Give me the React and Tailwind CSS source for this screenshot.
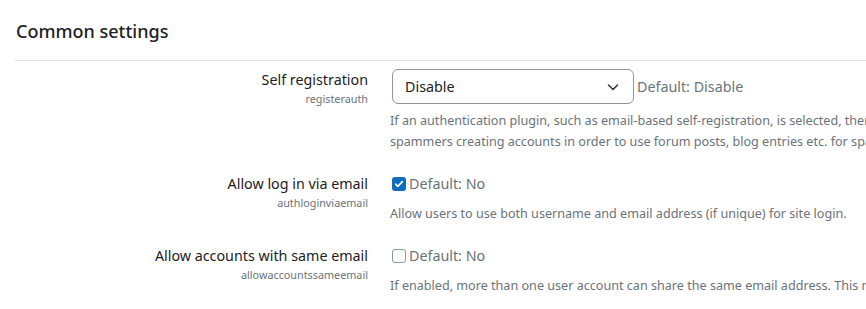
const SETTINGS = [
  {
    label: 'Self registration',
    name: 'registerauth',
    kind: 'select',
    value: 'Disable',
    def: 'Default: Disable',
    desc: [
      'If an authentication plugin, such as email-based self-registration, is selected, then it enables potential users to register themselves and create accounts. This results in the possibility of',
      'spammers creating accounts in order to use forum posts, blog entries etc. for spam. To avoid this risk, self-registration should be disabled or limited by Allowed email domains setting.',
    ],
  },
  {
    label: 'Allow log in via email',
    name: 'authloginviaemail',
    kind: 'checkbox',
    checked: true,
    def: 'Default: No',
    desc: ['Allow users to use both username and email address (if unique) for site login.'],
  },
  {
    label: 'Allow accounts with same email',
    name: 'allowaccountssameemail',
    kind: 'checkbox',
    checked: false,
    def: 'Default: No',
    desc: [
      'If enabled, more than one user account can share the same email address. This may result in security and privacy issues, for example with password change confirmation.',
    ],
  },
]

function Checkbox({ checked }) {
  if (checked) {
    return (
      <span className="w-[14px] h-[14px] rounded-[3px] bg-[#0f6cbf] flex items-center justify-center shrink-0">
        <svg className="w-[10px] h-[10px]" viewBox="0 0 12 12" fill="none">
          <path d="M2 6.2l2.6 2.6L10 3.2" stroke="#fff" strokeWidth={2} strokeLinecap="round" strokeLinejoin="round" />
        </svg>
      </span>
    )
  }
  return <span className="w-[14px] h-[14px] rounded-[3px] border border-[#8f959e] bg-white shrink-0" />
}

export default function App() {
  return (
    <div
      className="w-[866px] h-[309px] overflow-hidden bg-white text-[#1d2125]"
      style={{ fontFamily: '"Noto Sans", "Open Sans", sans-serif' }}
    >
      <div className="pl-[15px] pt-[19px]">
        <h3 className="text-[18px] leading-[24px] font-medium pl-px">Common settings</h3>
        <div className="mt-[17px] border-t border-[#dee2e6] w-[900px]" />

        <div className="pt-[8px] flex flex-col gap-[21px]">
          {SETTINGS.map(s => (
            <div key={s.name} className="flex">
              {/* Label */}
              <div className="w-[353px] shrink-0 text-right">
                <div className="text-[14.3px] leading-[22px]">{s.label}</div>
                <div className="text-[10.8px] leading-[16px] text-[#6a737b]">{s.name}</div>
              </div>

              {/* Control */}
              <div className="ml-[24px] w-[1200px] shrink-0">
                {s.kind === 'select' ? (
                  <div className="flex items-center">
                    <div className="w-[242px] h-[35px] rounded-[6px] border border-[#8f959e] flex items-center justify-between pl-[12px] pr-[14px]">
                      <span className="text-[14.3px]">{s.value}</span>
                      <svg className="w-[12px] h-[12px]" viewBox="0 0 12 12" fill="none">
                        <path d="M1.5 4l4.5 4.5L10.5 4" stroke="#343a40" strokeWidth={1.6} strokeLinecap="round" strokeLinejoin="round" />
                      </svg>
                    </div>
                    <span className="ml-[3px] text-[14.3px] text-[#6a737b]">{s.def}</span>
                  </div>
                ) : (
                  <div className="flex items-center gap-[3px] h-[22px]">
                    <Checkbox checked={s.checked} />
                    <span className="text-[14.3px] text-[#6a737b]">{s.def}</span>
                  </div>
                )}
                <div className={`${s.kind === 'select' ? 'mt-[6px]' : 'mt-[8px]'} text-[12.6px] leading-[21px] text-[#6a737b] -ml-[2px]`}>
                  {s.desc.map((line, i) => (
                    <div key={i} className="whitespace-nowrap">{line}</div>
                  ))}
                </div>
              </div>
            </div>
          ))}
        </div>
      </div>
    </div>
  )
}
